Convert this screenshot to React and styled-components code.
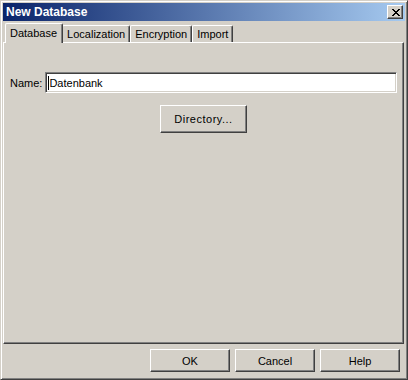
import React from "react";
import styled, { createGlobalStyle, css } from "styled-components";

const Global = createGlobalStyle`
  html, body { margin: 0; padding: 0; background: #d4d0c8; }
  * { box-sizing: border-box; }
  body { font-family: "Liberation Sans", Arial, sans-serif; font-size: 11px; color: #000; }
`;

const Window = styled.div`
  width: 408px;
  height: 380px;
  background: #d4d0c8;
  border: 1px solid;
  border-color: #d4d0c8 #404040 #404040 #d4d0c8;
  box-shadow: inset 1px 1px #ffffff, inset -1px -1px #808080;
  padding: 2px;
  display: flex;
  flex-direction: column;
`;

const TitleBar = styled.div`
  height: 18px;
  flex: none;
  display: flex;
  align-items: center;
  justify-content: space-between;
  padding: 0 2px 0 3px;
  background: linear-gradient(to right, #0a246a, #a6caf0);
`;

const Title = styled.span`
  color: #fff;
  font-weight: bold;
  font-size: 12px;
`;

const CloseButton = styled.div`
  width: 16px;
  height: 14px;
  background: #d4d0c8;
  border: 1px solid;
  border-color: #ffffff #404040 #404040 #ffffff;
  box-shadow: inset -1px -1px #808080;
  display: flex;
  align-items: center;
  justify-content: center;
  padding-left: 1px;
`;

const Body = styled.div`
  flex: 1;
  display: flex;
  flex-direction: column;
  padding: 2px 1px 5px 0;
  min-height: 0;
`;

const TabStrip = styled.div`
  display: flex;
  align-items: flex-end;
  height: 19px;
  padding-left: 4px;
  flex: none;
  position: relative;
  z-index: 1;
`;

const Tab = styled.div`
  height: 17px;
  display: flex;
  align-items: center;
  padding: 0 4px 1px 4px;
  background: #d4d0c8;
  border-top: 1px solid #fff;
  border-left: 1px solid #fff;
  border-right: 1px solid #404040;
  border-top-left-radius: 2px;
  border-top-right-radius: 2px;
  box-shadow: inset -1px 0 #808080;
  white-space: nowrap;
  ${(p) =>
    p.$active &&
    css`
      height: 20px;
      margin: 0 -1px -1px -2px;
      padding: 0 5px 2px 4px;
      position: relative;
      z-index: 2;
    `}
`;

const Panel = styled.div`
  flex: 1;
  border: 1px solid;
  border-color: #ffffff #404040 #404040 #ffffff;
  box-shadow: inset -1px -1px #808080;
  padding: 29px 6px 0 6px;
  display: flex;
  flex-direction: column;
  align-items: stretch;
`;

const FieldRow = styled.div`
  display: flex;
  align-items: center;
  gap: 3px;
`;

const Label = styled.span`
  white-space: nowrap;
`;

const TextBox = styled.div`
  flex: 1;
  height: 21px;
  background: #fff;
  border: 1px solid;
  border-color: #808080 #ffffff #ffffff #808080;
  box-shadow: inset 1px 1px #404040, inset -1px -1px #d4d0c8;
  display: flex;
  align-items: center;
  padding-left: 2px;
  color: #000;
`;

const Caret = styled.span`
  display: inline-block;
  width: 1px;
  height: 14px;
  background: #000;
`;

const Button = styled.div`
  width: ${(p) => p.$w || 80}px;
  height: ${(p) => p.$h || 23}px;
  background: #d4d0c8;
  border: 1px solid;
  border-color: #ffffff #404040 #404040 #ffffff;
  box-shadow: inset -1px -1px #808080;
  display: flex;
  align-items: center;
  justify-content: center;
  flex: none;
  letter-spacing: ${(p) => p.$ls || 0}px;
`;

const CenterRow = styled.div`
  display: flex;
  justify-content: center;
  margin-top: 12px;
`;

const ButtonRow = styled.div`
  display: flex;
  justify-content: flex-end;
  gap: 5px;
  margin-top: 5px;
  padding-right: 4px;
  flex: none;
`;

export default function App() {
  return (
    <>
      <Global />
      <Window>
        <TitleBar>
          <Title>New Database</Title>
          <CloseButton>
            <svg width="8" height="7" viewBox="0 0 8 7" shapeRendering="crispEdges">
              <path
                fill="#000"
                d="M0 0h2v1H0zM6 0h2v1H6zM1 1h2v1H1zM5 1h2v1H5zM2 2h4v1H2zM3 3h2v1H3zM2 4h4v1H2zM1 5h2v1H1zM5 5h2v1H5zM0 6h2v1H0zM6 6h2v1H6z"
              />
            </svg>
          </CloseButton>
        </TitleBar>
        <Body>
          <TabStrip>
            <Tab $active>Database</Tab>
            <Tab>Localization</Tab>
            <Tab>Encryption</Tab>
            <Tab>Import</Tab>
          </TabStrip>
          <Panel>
            <FieldRow>
              <Label>Name:</Label>
              <TextBox>
                <Caret />
                Datenbank
              </TextBox>
            </FieldRow>
            <CenterRow>
              <Button $w={87} $h={28} $ls={0.5}>Directory...</Button>
            </CenterRow>
          </Panel>
          <ButtonRow>
            <Button>OK</Button>
            <Button>Cancel</Button>
            <Button>Help</Button>
          </ButtonRow>
        </Body>
      </Window>
    </>
  );
}
